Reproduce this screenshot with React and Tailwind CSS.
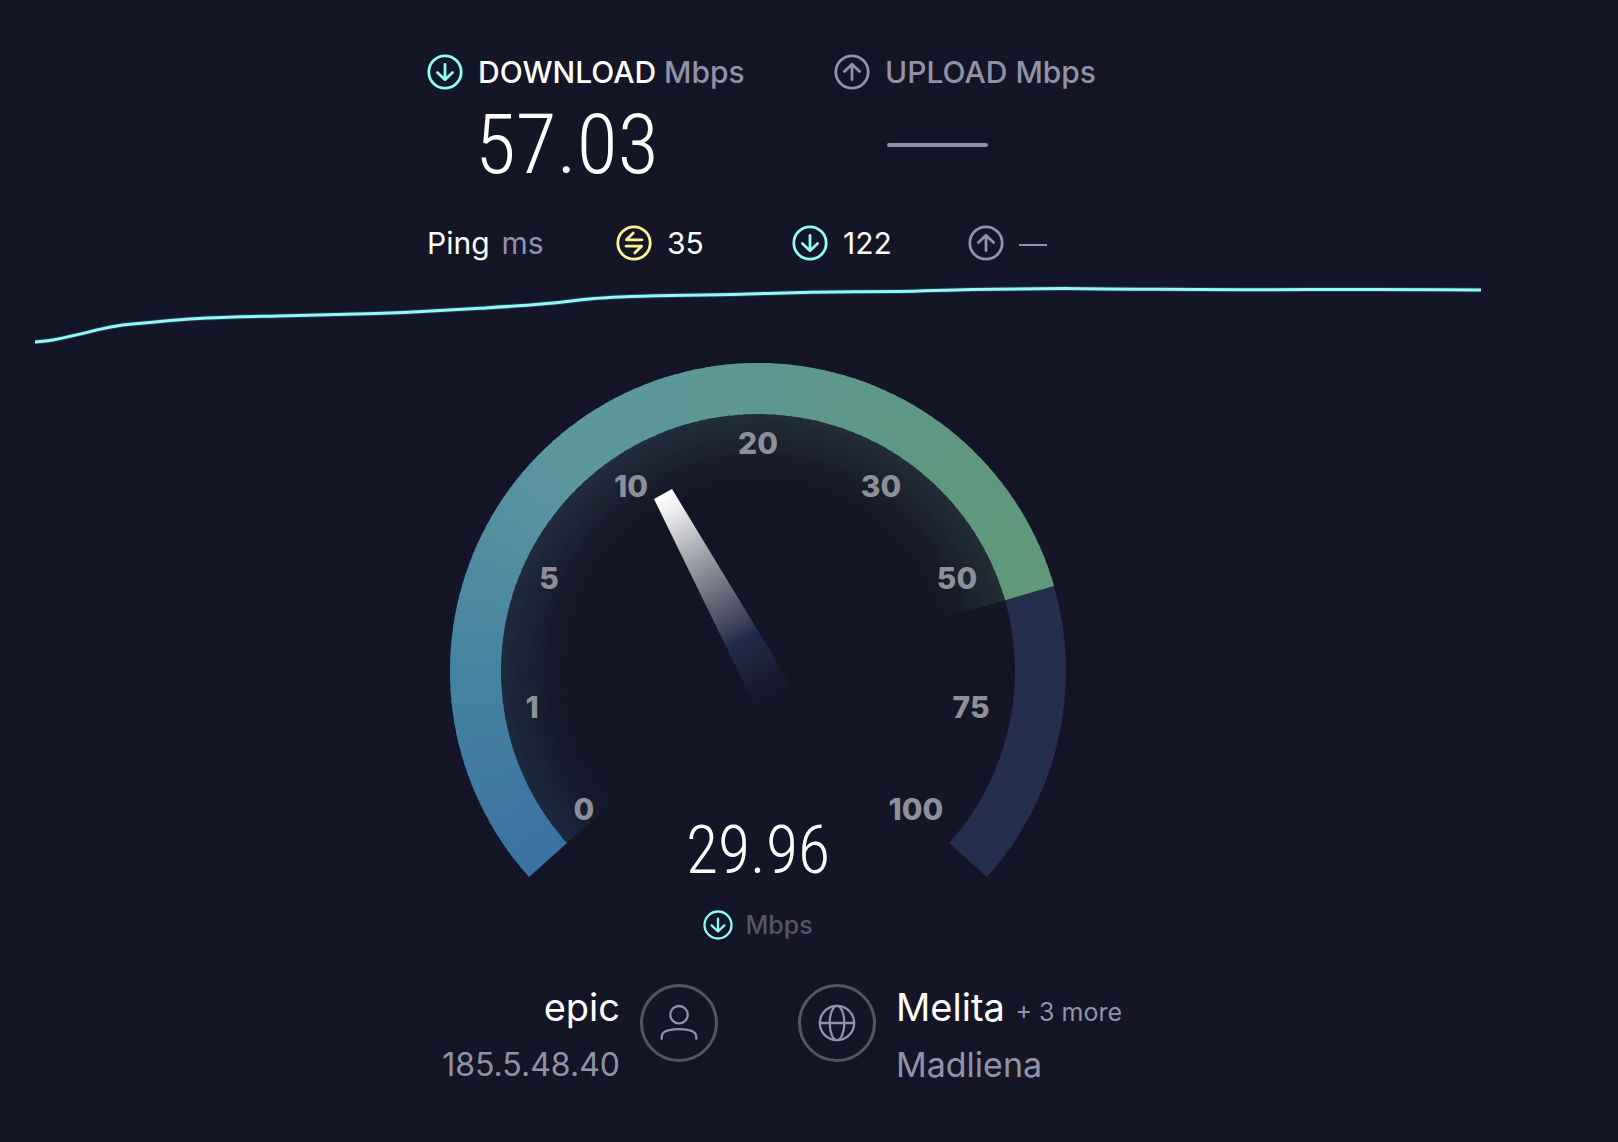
import React from 'react';

const CX = 308;
const CY = 308;
const START = -132;
const END = 132;
const VALUE = 74;

const stops = [
  { at: -132, rgb: [58, 114, 162] },
  { at: -90, rgb: [70, 131, 160] },
  { at: -45, rgb: [92, 151, 159] },
  { at: 0, rgb: [94, 151, 146] },
  { at: 45, rgb: [96, 151, 128] },
  { at: 74, rgb: [97, 152, 121] },
];

const labels = [
  { text: '0', x: 134, y: 457 },
  { text: '1', x: 82, y: 355 },
  { text: '5', x: 99, y: 226 },
  { text: '10', x: 181, y: 134 },
  { text: '20', x: 308, y: 91 },
  { text: '30', x: 431, y: 134 },
  { text: '50', x: 507, y: 226 },
  { text: '75', x: 521, y: 355 },
  { text: '100', x: 466, y: 457 },
];

const history = [
  [0, 62], [18, 60], [48, 53.4], [68, 48.6], [92, 44.6], [172, 38], [254, 35.7], [321, 34], [378, 32],
  [445, 28.3], [507, 24], [559, 18.6], [585, 17], [636, 15.5], [698, 14.4], [776, 12.3], [864, 11.4],
  [937, 9.4], [1026, 8.6], [1099, 9.2], [1208, 9.8], [1339, 9.4], [1446, 10],
];

const polar = (angle, r) => {
  const rad = (angle * Math.PI) / 180;
  return [CX + r * Math.sin(rad), CY - r * Math.cos(rad)];
};

// Ring section between two angles, 0 is straight up
const ring = (from, to, inner, outer) => {
  const [x1, y1] = polar(from, outer);
  const [x2, y2] = polar(to, outer);
  const [x3, y3] = polar(to, inner);
  const [x4, y4] = polar(from, inner);
  const large = to - from > 180 ? 1 : 0;
  return `M${x1} ${y1}A${outer} ${outer} 0 ${large} 1 ${x2} ${y2}L${x3} ${y3}A${inner} ${inner} 0 ${large} 0 ${x4} ${y4}Z`;
};

const colorAt = (angle) => {
  const i = Math.max(1, stops.findIndex((s) => s.at >= angle));
  const a = stops[i - 1];
  const b = stops[i];
  const t = (angle - a.at) / (b.at - a.at);
  return `rgb(${a.rgb.map((v, k) => Math.round(v + (b.rgb[k] - v) * t)).join(',')})`;
};

const smooth = (pts) => {
  let d = `M${pts[0][0]} ${pts[0][1]}`;
  for (let i = 0; i < pts.length - 1; i++) {
    const p0 = pts[i - 1] || pts[i];
    const p1 = pts[i];
    const p2 = pts[i + 1];
    const p3 = pts[i + 2] || p2;
    const h = (p2[0] - p1[0]) / 3;
    const m1 = (p2[1] - p0[1]) / (p2[0] - p0[0]);
    const m2 = (p3[1] - p1[1]) / (p3[0] - p1[0]);
    d += `C${p1[0] + h} ${p1[1] + m1 * h} ${p2[0] - h} ${p2[1] - m2 * h} ${p2[0]} ${p2[1]}`;
  }
  return d;
};

const steps = [];
for (let a = START; a < VALUE; a += 2) steps.push(a);

// Each section runs slightly under the next one so no seam shows
const sectionEnd = (a) => Math.min(a + 2.6, VALUE);

const StatusIcon = ({ type, className }) => (
  <svg viewBox="-18 -18 36 36" fill="none" stroke="currentColor" strokeWidth="2.8" strokeLinecap="round" strokeLinejoin="round" className={`shrink-0 ${className}`} aria-hidden="true">
    <circle r="16.2" />
    {type === 'down' && <path d="M0 -7.6V7.6M-7.6 .4L0 7.8L7.6 .4" />}
    {type === 'up' && <path d="M0 7.6V-7.6M-7.6 -.4L0 -7.8L7.6 -.4" />}
    {type === 'ping' && <path d="M8 -3.2H-7.6L-.8 -10M-8 3.2H7.6L.8 10" />}
  </svg>
);

const SpeedChart = () => {
  const d = smooth(history);
  return (
    <svg viewBox="0 0 1446 72" fill="none" className="block w-full" role="img" aria-label="Download speed over time">
      <path d={d} stroke="#4a6a98" strokeOpacity="0.4" strokeWidth="5" />
      <path d={d} stroke="#90fbf3" strokeWidth="3" />
    </svg>
  );
};

const Gauge = () => (
  <div className="relative mx-auto mt-[11px] w-full max-w-[616px]">
    <svg viewBox="0 0 616 516" className="block w-full">
      <defs>
        <radialGradient id="glow" gradientUnits="userSpaceOnUse" cx={CX} cy={CY} r="257">
          <stop offset="0.7" stopColor="#fff" stopOpacity="0" />
          <stop offset="0.8" stopColor="#fff" stopOpacity="0.04" />
          <stop offset="0.9" stopColor="#fff" stopOpacity="0.12" />
          <stop offset="1" stopColor="#fff" stopOpacity="0.19" />
        </radialGradient>
        <mask id="glowMask" maskUnits="userSpaceOnUse" x="0" y="0" width="616" height="516">
          <rect width="616" height="516" fill="url(#glow)" />
        </mask>
        <linearGradient id="needle" gradientUnits="userSpaceOnUse" x1="213" y1="131" x2="325" y2="336">
          <stop offset="0" stopColor="#ffffff" />
          <stop offset="0.08" stopColor="#eeeeef" />
          <stop offset="0.32" stopColor="#9c9ea7" />
          <stop offset="0.5" stopColor="#666979" />
          <stop offset="0.65" stopColor="#3a4056" />
          <stop offset="0.71" stopColor="#212b48" />
          <stop offset="1" stopColor="#212b48" stopOpacity="0" />
        </linearGradient>
      </defs>
      <path d={ring(VALUE, END, 257, 308)} fill="#252f4c" />
      {steps.map((a) => (
        <path key={a} d={ring(a, sectionEnd(a), 257, 308)} fill={colorAt(a + 1)} />
      ))}
      <g mask="url(#glowMask)">
        {steps.map((a) => (
          <path key={a} d={ring(a, sectionEnd(a), 170, 257)} fill={colorAt(a + 1)} />
        ))}
      </g>
      <path d="M204 136L222 126L348 334L306 345Z" fill="url(#needle)" />
      <g fill="#8e9099" fontFamily="Inter, sans-serif" fontSize="30" fontWeight="800" textAnchor="middle">
        {labels.map((l) => (
          <text key={l.text} x={l.x} y={l.y}>{l.text}</text>
        ))}
      </g>
    </svg>
    <p className="absolute inset-x-0 bottom-0 text-center font-['Roboto_Condensed',Roboto,sans-serif] text-[66px] leading-14 font-light text-white">
      29.96
    </p>
  </div>
);

const App = () => {
  return (
    <main className="min-h-screen bg-[#141526] pt-[54px] pr-[137px] pb-10 pl-[35px] font-[Inter,sans-serif] text-[#9192a8]">
      <section className="mx-auto max-w-[662px] text-[30px] leading-9 whitespace-nowrap">
        <div className="grid grid-cols-[407px_1fr] font-medium">
          <div>
            <h2 className="flex items-center gap-[15px]">
              <StatusIcon type="down" className="size-9 text-[#90fbf3]" />
              <span><span className="text-white">DOWNLOAD</span> Mbps</span>
            </h2>
            <p className="flex h-[110px] items-center pl-12 font-['Roboto_Condensed',Roboto,sans-serif] text-[84px] font-light text-white">57.03</p>
          </div>
          <div>
            <h2 className="flex items-center gap-[15px]">
              <StatusIcon type="up" className="size-9" />
              <span>UPLOAD Mbps</span>
            </h2>
            <div className="flex h-[110px] items-center pl-[53px]">
              <span className="h-1 w-[101px] rounded-full bg-[#9192a8]" />
            </div>
          </div>
        </div>

        <div className="mt-[25px] grid grid-cols-[189px_176px_176px_1fr] items-center">
          <div className="flex gap-3"><span className="text-white">Ping</span><span>ms</span></div>
          <div className="flex items-center gap-[15px]">
            <StatusIcon type="ping" className="size-9 text-[#fff094]" />
            <span className="text-white">35</span>
          </div>
          <div className="flex items-center gap-[15px]">
            <StatusIcon type="down" className="size-9 text-[#90fbf3]" />
            <span className="text-white">122</span>
          </div>
          <div className="flex items-center gap-[15px]">
            <StatusIcon type="up" className="size-9" />
            <span className="mt-1 h-0.5 w-7 bg-[#9192a8]" />
          </div>
        </div>
      </section>

      <div className="mt-[19px]">
        <SpeedChart />
      </div>

      <Gauge />

      <div className="mt-[30px] flex items-center justify-center gap-3 text-[25px] leading-8 font-medium text-[#545567]">
        <StatusIcon type="down" className="size-[30px] text-[#90fbf3]" />
        Mbps
      </div>

      <section className="mt-[37px] grid grid-cols-2 gap-20">
        <div className="flex items-start justify-end gap-5">
          <div className="text-right">
            <p className="text-[38px] leading-[58px] text-white">epic</p>
            <p className="text-[32px] leading-[58px]">185.5.48.40</p>
          </div>
          <svg viewBox="-39 -39 78 78" fill="none" className="mt-1.5 size-[78px] shrink-0" aria-hidden="true">
            <circle r="37.5" stroke="#545567" strokeWidth="3" />
            <g stroke="#9192a8" strokeWidth="2.3" strokeLinecap="round">
              <circle cy="-8.3" r="8.7" />
              <path d="M-17.3 15.8V14C-17.3 10.5 -15.5 8.5 -11 7.3Q0 4.8 11 7.3C15.5 8.5 17.3 10.5 17.3 14V15.8" />
            </g>
          </svg>
        </div>
        <div className="flex items-start gap-5 whitespace-nowrap">
          <svg viewBox="-39 -39 78 78" fill="none" className="mt-1.5 size-[78px] shrink-0" aria-hidden="true">
            <circle r="37.5" stroke="#545567" strokeWidth="3" />
            <g stroke="#9192a8" strokeWidth="2.3">
              <circle r="17.2" />
              <ellipse rx="7.3" ry="17.2" />
              <path d="M-17 0H17" />
            </g>
          </svg>
          <div>
            <p className="text-[38px] leading-[58px] text-white">Melita <span className="text-[25px] leading-none text-[#9192a8]">+ 3 more</span></p>
            <p className="text-[34px] leading-[58px]">Madliena</p>
          </div>
        </div>
      </section>
    </main>
  );
};

export default App;
